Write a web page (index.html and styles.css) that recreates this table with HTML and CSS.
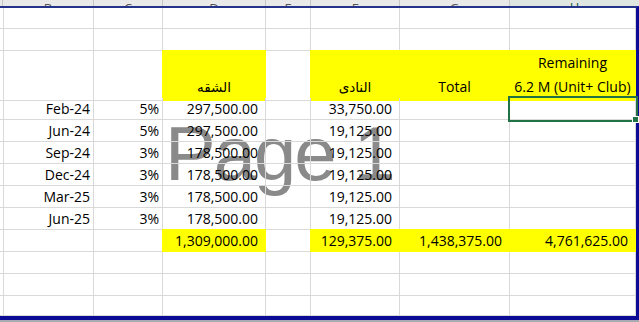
FILE: index.html
```html
<!DOCTYPE html>
<html lang="en">
<head>
<meta charset="utf-8">
<title>Sheet</title>
<link rel="stylesheet" href="styles.css">
</head>
<body>
<div class="sheet">
  <div class="colhdr">
    <div class="h"></div>
    <div class="h"><span>B</span></div>
    <div class="h"><span>C</span></div>
    <div class="h"><span>D</span></div>
    <div class="h"><span>E</span></div>
    <div class="h"><span>F</span></div>
    <div class="h"><span>G</span></div>
    <div class="h sel"><span>H</span></div>
  </div>
  <div class="area">
    <div class="wm">Page 1</div>
    <div class="grid">
      <div class="row r1">
        <div class="c"></div><div class="c"></div><div class="c"></div><div class="c"></div><div class="c"></div><div class="c"></div><div class="c"></div><div class="c"></div>
      </div>
      <div class="row">
        <div class="c"></div><div class="c"></div><div class="c"></div><div class="c"></div><div class="c"></div><div class="c"></div><div class="c"></div><div class="c"></div>
      </div>
      <div class="row r3">
        <div class="c"></div><div class="c"></div><div class="c"></div>
        <div class="c y ctr"><span class="ar">الشقه</span></div>
        <div class="c"></div>
        <div class="c y ctr"><span class="ar">النادى</span></div>
        <div class="c y ctr">Total</div>
        <div class="c y ctr two"><span>Remaining</span><span>6.2 M (Unit+ Club)</span></div>
      </div>
      <div class="row">
        <div class="c"></div><div class="c">Feb-24</div><div class="c">5%</div><div class="c num">297,500.00</div><div class="c"></div><div class="c num">33,750.00</div><div class="c"></div><div class="c active"></div>
      </div>
      <div class="row">
        <div class="c"></div><div class="c">Jun-24</div><div class="c">5%</div><div class="c num">297,500.00</div><div class="c"></div><div class="c num">19,125.00</div><div class="c"></div><div class="c"></div>
      </div>
      <div class="row">
        <div class="c"></div><div class="c">Sep-24</div><div class="c">3%</div><div class="c num">178,500.00</div><div class="c"></div><div class="c num">19,125.00</div><div class="c"></div><div class="c"></div>
      </div>
      <div class="row">
        <div class="c"></div><div class="c">Dec-24</div><div class="c">3%</div><div class="c num">178,500.00</div><div class="c"></div><div class="c num">19,125.00</div><div class="c"></div><div class="c"></div>
      </div>
      <div class="row">
        <div class="c"></div><div class="c">Mar-25</div><div class="c">3%</div><div class="c num">178,500.00</div><div class="c"></div><div class="c num">19,125.00</div><div class="c"></div><div class="c"></div>
      </div>
      <div class="row">
        <div class="c"></div><div class="c">Jun-25</div><div class="c">3%</div><div class="c num">178,500.00</div><div class="c"></div><div class="c num">19,125.00</div><div class="c"></div><div class="c"></div>
      </div>
      <div class="row">
        <div class="c"></div><div class="c"></div><div class="c"></div><div class="c num y">1,309,000.00</div><div class="c"></div><div class="c num y">129,375.00</div><div class="c num y">1,438,375.00</div><div class="c num y">4,761,625.00</div>
      </div>
      <div class="row">
        <div class="c"></div><div class="c"></div><div class="c"></div><div class="c"></div><div class="c"></div><div class="c"></div><div class="c"></div><div class="c"></div>
      </div>
      <div class="row">
        <div class="c"></div><div class="c"></div><div class="c"></div><div class="c"></div><div class="c"></div><div class="c"></div><div class="c"></div><div class="c"></div>
      </div>
      <div class="row rlast">
        <div class="c"></div><div class="c"></div><div class="c"></div><div class="c"></div><div class="c"></div><div class="c"></div><div class="c"></div><div class="c"></div>
      </div>
    </div>
  </div>
</div>
</body>
</html>
```
FILE: styles.css
```css
* { box-sizing: border-box; }
html, body { margin: 0; padding: 0; }
body {
  width: 639px;
  height: 322px;
  overflow: hidden;
  background: #a9a9b4;
  font-family: "Open Sans", "DejaVu Sans", sans-serif;
  font-size: 14px;
  color: #000;
}
.sheet {
  width: 639px;
  background: #fff;
}
.colhdr {
  display: grid;
  grid-template-columns: 3px 91px 69px 103px 45px 89px 110px 129px;
  height: 6px;
  background: #e9e9e9;
  overflow: hidden;
}
.h {
  border-right: 1px solid #c6c6c6;
  display: flex;
  justify-content: center;
  align-items: flex-end;
  color: #555;
  font-size: 13px;
}
.h span { line-height: 14px; margin-bottom: 3px; }
.h.sel { background: #dfe6e2; border-bottom: 1px solid #2d5d4a; color: #1e5a3a; border-right: none; }
.area {
  position: relative;
  border-top: 2px solid #24338a;
  border-right: 3px solid #0b0b96;
  border-bottom: 4px solid #0b0b96;
  width: 639px;
}
.wm {
  position: absolute;
  left: 165px;
  top: 108px;
  font-family: "Liberation Sans", Arial, sans-serif;
  font-size: 76px;
  line-height: 1;
  color: #8a8a8a;
  letter-spacing: -2px;
  white-space: nowrap;
  z-index: 0;
}
.grid { position: relative; z-index: 1; }
.row {
  display: grid;
  grid-template-columns: 3px 91px 69px 103px 45px 89px 110px 126px;
  height: 22px;
}
.row.r1 { height: 21px; }
.row.r3 { height: 47px; }
.row.rlast { height: 20px; }
.c {
  border-right: 1px solid #d9d9d9;
  border-bottom: 1px solid #d9d9d9;
  display: flex;
  justify-content: flex-end;
  align-items: flex-end;
  padding: 0 3px 0 0;
  line-height: 20px;
  white-space: nowrap;
  position: relative;
}
.c.num { padding-right: 7px; }
.c.y {
  background: #ffff00;
  border-color: #ffff00;
  box-shadow: 0 -1px 0 #ffff00, -1px 0 0 #ffff00, -1px -1px 0 #ffff00;
}
.c.ctr { justify-content: center; padding: 0 0 3px 0; }
.c.two { flex-direction: column; align-items: center; justify-content: flex-end; line-height: 24px; padding-bottom: 1px; }
.ar { font-family: "DejaVu Sans", sans-serif; font-size: 13.5px; direction: rtl; }
.c.active {
  outline: 2px solid #217346;
  outline-offset: 0;
  z-index: 2;
}
.c.active::after {
  content: "";
  position: absolute;
  right: -4px;
  bottom: -4px;
  width: 5px;
  height: 5px;
  background: #217346;
  border: 1px solid #fff;
}
```
